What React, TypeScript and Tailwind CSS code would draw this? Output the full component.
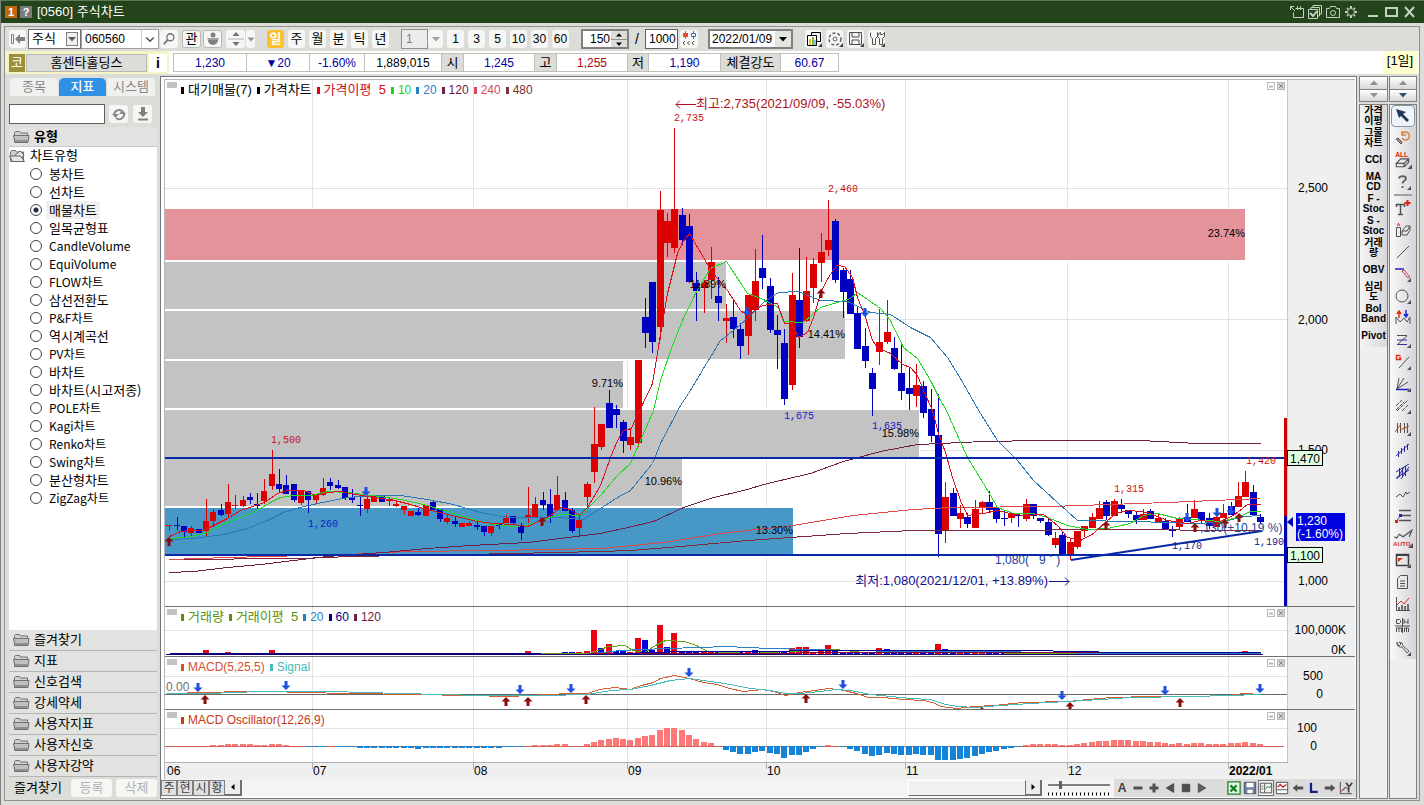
import { useState } from 'react'
import type { ReactNode } from 'react'

type Candle = [dir: 'r' | 'b', high: number, top: number, bottom: number, low: number]

const RED = '#dc0000'
const BLUE = '#0000c0'

const barX = (i: number) => Math.round(169.3 + i * 7.32)

const CANDLES: Candle[] = [
  ['r', 525, 525, 526, 531], ['b', 517, 525, 526, 530], ['b', 526, 526, 532, 537], ['r', 526, 528, 533, 537],
  ['b', 529, 529, 533, 533], ['r', 499, 521, 531, 536], ['r', 509, 512, 521, 527], ['b', 504, 510, 515, 516],
  ['r', 484, 502, 514, 517], ['r', 495, 505, 506, 509], ['r', 496, 500, 506, 507], ['b', 493, 497, 500, 504],
  ['b', 493, 504, 506, 509], ['r', 479, 491, 501, 504], ['r', 450, 474, 486, 490], ['b', 469, 484, 489, 493],
  ['b', 475, 485, 494, 494], ['b', 484, 484, 500, 502], ['r', 491, 491, 503, 505], ['b', 491, 491, 500, 513],
  ['r', 495, 495, 500, 504], ['r', 478, 488, 495, 496], ['b', 478, 482, 486, 490], ['b', 480, 485, 488, 489],
  ['b', 487, 487, 498, 500], ['b', 489, 497, 500, 503], ['b', 496, 505, 506, 516], ['r', 497, 499, 509, 513],
  ['r', 495, 495, 502, 502], ['b', 496, 496, 502, 502], ['r', 497, 499, 501, 506], ['r', 500, 504, 506, 507],
  ['r', 506, 506, 510, 514], ['r', 511, 511, 516, 516], ['b', 508, 512, 515, 516], ['r', 505, 505, 516, 516],
  ['b', 501, 502, 510, 510], ['b', 509, 509, 519, 522], ['r', 514, 518, 522, 524], ['b', 517, 521, 524, 527],
  ['r', 523, 523, 527, 527], ['r', 521, 523, 526, 526], ['b', 522, 525, 527, 530], ['b', 526, 526, 532, 536],
  ['r', 526, 526, 533, 536], ['b', 523, 523, 526, 529], ['r', 515, 518, 523, 523], ['b', 516, 516, 523, 525],
  ['b', 523, 526, 533, 540], ['r', 487, 515, 517, 523], ['r', 497, 504, 518, 518], ['b', 492, 500, 505, 510],
  ['b', 489, 504, 516, 523], ['r', 476, 495, 510, 510], ['b', 492, 500, 511, 511], ['b', 508, 510, 531, 533],
  ['r', 516, 520, 528, 536], ['r', 482, 484, 497, 507], ['r', 407, 444, 472, 483], ['r', 424, 424, 447, 450],
  ['b', 390, 403, 428, 428], ['b', 405, 409, 415, 428], ['b', 420, 422, 441, 453], ['r', 428, 437, 445, 450],
  ['r', 360, 360, 443, 447], ['b', 298, 317, 333, 348], ['b', 282, 282, 342, 353], ['r', 191, 210, 327, 340],
  ['r', 213, 221, 243, 257], ['r', 128, 209, 248, 253], ['b', 208, 215, 240, 245], ['b', 214, 226, 282, 283],
  ['b', 272, 283, 291, 321], ['r', 280, 282, 288, 313], ['r', 247, 262, 280, 299], ['b', 277, 296, 303, 321],
  ['r', 304, 318, 321, 343], ['b', 299, 317, 329, 338], ['b', 323, 329, 346, 359], ['r', 295, 295, 336, 355],
  ['r', 249, 281, 310, 321], ['b', 235, 268, 278, 289], ['b', 278, 286, 330, 333], ['b', 315, 330, 335, 369],
  ['b', 329, 343, 399, 405], ['r', 273, 295, 385, 390], ['b', 248, 300, 337, 348], ['r', 257, 291, 321, 322],
  ['r', 258, 264, 288, 303], ['r', 233, 252, 263, 282], ['r', 200, 240, 250, 256], ['b', 219, 221, 280, 283],
  ['b', 268, 270, 292, 318], ['b', 270, 279, 314, 314], ['b', 307, 313, 349, 349], ['b', 328, 346, 361, 368],
  ['b', 368, 373, 389, 416], ['r', 309, 342, 352, 365], ['r', 300, 332, 342, 344], ['b', 337, 348, 369, 370],
  ['b', 342, 373, 391, 400], ['b', 368, 388, 394, 410], ['r', 364, 385, 396, 407], ['b', 381, 386, 413, 418],
  ['b', 389, 409, 436, 442], ['b', 394, 435, 534, 557], ['r', 482, 497, 530, 543], ['b', 488, 493, 516, 516],
  ['r', 505, 513, 519, 528], ['b', 513, 517, 524, 528], ['r', 500, 509, 528, 528], ['r', 501, 502, 507, 514],
  ['b', 491, 502, 510, 513], ['b', 508, 508, 519, 523], ['b', 510, 518, 519, 526], ['r', 514, 514, 518, 523],
  ['b', 515, 515, 516, 527], ['r', 499, 504, 519, 521], ['b', 504, 504, 516, 519], ['b', 518, 518, 521, 523],
  ['b', 517, 522, 535, 536], ['r', 532, 538, 545, 548], ['b', 531, 535, 554, 554], ['r', 539, 542, 555, 560],
  ['r', 531, 531, 547, 549], ['r', 526, 526, 531, 537], ['r', 513, 517, 528, 528], ['r', 501, 508, 519, 519],
  ['b', 500, 502, 516, 520], ['r', 499, 501, 516, 516], ['b', 499, 505, 509, 513], ['b', 510, 510, 514, 518],
  ['b', 512, 515, 520, 524], ['r', 509, 514, 520, 520], ['b', 509, 511, 519, 519], ['r', 513, 518, 523, 523],
  ['b', 518, 521, 529, 529], ['b', 526, 529, 531, 537], ['r', 517, 518, 527, 530], ['b', 504, 517, 522, 522],
  ['r', 500, 509, 518, 518], ['b', 512, 512, 521, 524], ['b', 513, 518, 526, 529], ['r', 511, 517, 527, 527],
  ['r', 504, 513, 518, 518], ['b', 502, 506, 515, 515], ['r', 482, 496, 507, 507], ['r', 471, 482, 497, 497],
  ['b', 485, 492, 515, 515], ['b', 514, 517, 522, 524],
]

const MOVING_AVERAGES = [
  {
    color: '#802838',
    points: '169,559 300,558 350,556 467,554 600,551 630,550 680,546 747,540 847,533 913,530 1000,530 1100,529 1260,530',
  },
  {
    color: '#e04848',
    points: '169,559 227,557 347,554 407,551 493,550 600,548 623,546 663,542 720,533 793,525 853,515 913,509 950,507 1050,506 1167,502 1260,498',
  },
  {
    color: '#702048',
    points: '169,572 193,571 227,567 260,564 293,560 327,556 383,552 427,548 470,545 527,542 560,538 600,533 623,528 653,521 683,507 713,497 743,490 767,483 810,473 843,461 880,451 917,444 940,443 983,441 1040,440 1140,440 1197,443 1260,443',
  },
  {
    color: '#2a78b8',
    points: '169,539 193,538 223,534 247,528 267,520 283,512 303,506 327,501 347,497 373,495 400,495 427,499 453,504 480,512 507,517 560,517 583,519 600,508 617,497 630,490 652,463 660,443 680,405 690,390 703,368 720,340 733,330 747,318 763,302 778,292 798,291 820,300 847,301 870,312 890,314 910,327 930,337 947,357 960,378 980,413 997,440 1017,460 1033,480 1057,502 1077,520 1133,521 1167,522 1190,523 1220,522 1243,516 1260,515',
  },
  {
    color: '#20d820',
    points: '169,538 192,536 207,532 220,525 237,518 253,512 270,502 280,497 293,495 310,495 327,491 347,492 363,494 380,496 400,499 423,504 447,511 470,518 493,524 513,526 527,525 547,518 560,514 580,515 590,505 600,495 617,475 630,463 640,440 653,410 660,380 672,345 682,320 695,293 710,268 726,261 747,293 763,299 778,307 783,321 803,322 820,307 837,302 850,298 857,292 880,308 890,320 903,347 917,358 930,380 940,400 945,408 958,437 967,457 983,483 997,507 1013,513 1033,513 1047,517 1067,525 1087,529 1107,528 1130,523 1143,515 1157,513 1177,518 1193,519 1220,521 1237,517 1250,511 1260,511',
  },
  {
    color: '#d81020',
    points: '169,536 180,531 190,530 203,530 227,518 240,510 249,507 264,502 277,493 287,490 303,490 315,495 327,492 340,491 350,493 373,497 390,499 410,504 430,510 443,513 460,517 477,521 493,523 513,524 527,526 540,520 550,515 560,507 570,509 579,515 587,507 600,485 610,457 617,440 623,430 631,428 635,418 643,402 652,383 659,340 667,293 677,253 682,242 689,233 703,257 712,272 727,290 740,310 747,315 762,305 777,303 784,323 791,323 798,337 807,332 813,317 821,290 828,277 836,265 844,266 852,277 857,297 865,317 872,340 877,347 890,353 902,364 910,367 917,375 923,390 932,410 938,433 945,452 952,477 960,500 967,515 983,513 997,510 1010,513 1023,515 1043,514 1057,525 1067,537 1080,540 1093,533 1107,520 1117,512 1130,510 1147,512 1167,520 1187,523 1200,520 1217,522 1233,515 1247,504 1260,504',
  },
]

const BANDS = [
  { y: 209, h: 51, right: 1245, fill: '#e5939b', label: '23.74%' },
  { y: 262, h: 47, right: 726, fill: '#c3c3c3', label: '11.89%' },
  { y: 311, h: 48, right: 845, fill: '#c3c3c3', label: '14.41%' },
  { y: 361, h: 47, right: 623, fill: '#c3c3c3', label: '9.71%' },
  { y: 410, h: 48, right: 919, fill: '#c3c3c3', label: '15.98%' },
  { y: 459, h: 47, right: 682, fill: '#c3c3c3', label: '10.96%' },
  { y: 508, h: 47, right: 793, fill: '#4798c6', label: '13.30%' },
]

const MONTH_LINES = [312, 473, 627, 766, 905, 1067, 1228]

const PRICE_TAGS: [x: number, y: number, text: string, color: string][] = [
  [674, 121, '2,735', '#c81018'],
  [828, 192, '2,460', '#c81018'],
  [271, 443, '1,500', '#c81018'],
  [1114, 492, '1,315', '#c81018'],
  [1246, 464, '1,420', '#c81018'],
  [308, 527, '1,260', '#1020c8'],
  [784, 419, '1,675', '#1020c8'],
  [872, 429, '1,635', '#1020c8'],
  [1172, 549, '1,170', '#102090'],
  [1254, 545, '1,190', '#102090'],
]

// index -> [top y, direction]
const VOLUME: Record<number, [number, 'r' | 'b']> = {
  5: [650, 'r'], 8: [652, 'r'], 13: [653, 'r'], 14: [650, 'r'], 49: [651, 'r'], 57: [651, 'r'], 58: [630, 'r'],
  59: [648, 'b'], 60: [644, 'r'], 61: [651, 'b'], 62: [651, 'b'], 64: [638, 'r'], 65: [640, 'b'], 66: [650, 'b'],
  67: [625, 'r'], 68: [647, 'b'], 69: [633, 'r'], 79: [651, 'r'], 80: [650, 'b'], 85: [648, 'r'], 86: [647, 'r'],
  87: [647, 'r'], 89: [650, 'r'], 90: [645, 'r'], 91: [649, 'b'], 97: [648, 'r'], 98: [649, 'b'], 99: [650, 'b'],
  105: [644, 'r'], 106: [649, 'b'], 117: [652, 'r'], 131: [652, 'r'], 140: [652, 'r'], 147: [651, 'r'],
}

const OSC = [
  0, 0, 0, 0, 0, 0, 1, 1, 2, 2, 2, 2, 1, 1, 2, 2, 1, 0, 0, -1, -1, -1, 0, -1, -1, -1, -2, -2, -2, -2, -2, -2, -2, -2,
  -3, -2, -2, -2, -2, -2, -2, -2, -2, -2, -2, -2, -1, -1, -1, 0, 1, 1, 1, 2, 2, 0, 0, 2, 4, 6, 7, 8, 7, 6, 8, 10, 11,
  16, 18, 18, 16, 11, 7, 4, 3, 0, -4, -6, -8, -8, -6, -5, -7, -8, -12, -9, -9, -6, -3, -1, 1, 0, -1, -3, -5, -8, -10,
  -9, -7, -8, -9, -9, -8, -9, -9, -14, -14, -14, -13, -12, -10, -8, -6, -5, -3, -2, -1, 1, 2, 2, 2, 2, 1, 1, 2, 3, 4,
  5, 5, 6, 6, 6, 5, 5, 4, 4, 3, 2, 3, 2, 3, 3, 2, 2, 2, 3, 3, 4, 3, 2,
]

const UP = '#8c0c0c'
const DOWN = '#1c50e0'

function Arrow({ x, y, up = false }: { x: number; y: number; up?: boolean }) {
  const d = up
    ? `M${x} ${y}l4.5 4.500h-3v4.500h-3v-4.500h-3z`
    : `M${x} ${y + 9}l4.500-4.500h-3v-4.500h-3v4.500h-3z`
  return <path d={d} fill={up ? UP : DOWN} />
}

function Grid({ top, bottom, rows }: { top: number; bottom: number; rows: number[] }) {
  return (
    <g shapeRendering="crispEdges">
      <rect x={165} y={top} width={1122} height={bottom - top} fill="#fff" />
      <rect x={1287} y={top} width={68} height={bottom - top} fill="#efefef" />
      {MONTH_LINES.map(x => <rect key={x} x={x} y={top} width={1} height={bottom - top} fill="#e4e4e4" />)}
      {rows.map(y => <rect key={y} x={165} y={y} width={1126} height={1} fill="#e2e2e2" />)}
      <rect x={1287} y={top} width={1} height={bottom - top} fill="#c8c8c8" />
    </g>
  )
}

// Half a unit in, so that flat one-pixel stretches fill a whole row.
function Lines({ children }: { children: ReactNode }) {
  return (
    <g fill="none" shapeRendering="crispEdges" transform="translate(0.5 0.5)">
      {children}
    </g>
  )
}

function PanelBoxes({ y }: { y: number }) {
  return (
    <g fill="none" stroke="#b8b8b8">
      <rect x={167} y={y} width={10} height={6} fill="#c2c2c2" stroke="none" />
      <rect x={1267.500} y={y + 0.5} width={7} height={7} />
      <path d={`M1269 ${y + 4.500}h4`} strokeWidth={2} />
      <rect x={1277.500} y={y + 0.5} width={7} height={7} fill="#d4d4d4" />
      <path d={`M1279 ${y + 2}l4 4m0-4l-4 4`} stroke="#888" />
    </g>
  )
}

function PriceChart() {
  return (
    <svg viewBox="165 80 1190 526" className="block w-full" role="img" aria-label="가격차트">
      <Grid top={80} bottom={606} rows={[188, 319, 450, 581]} />
      <PanelBoxes y={82} />
      <g shapeRendering="crispEdges">
        {BANDS.map(b => (
          <g key={b.label}>
            <rect x={165} y={b.y - 2} width={b.right - 165} height={b.h + 4} fill="#fff" />
            <rect x={165} y={b.y} width={b.right - 165} height={b.h} fill={b.fill} />
          </g>
        ))}
        {CANDLES.map(([dir, high, top, bottom, low], i) => (
          <g key={i} fill={dir === 'r' ? RED : BLUE}>
            <rect x={barX(i)} y={high} width={1} height={Math.max(1, low - high)} />
            <rect x={barX(i) - 3} y={top} width={i < 57 ? 6 : 7} height={bottom - top} />
          </g>
        ))}
      </g>
      <Lines>
        {MOVING_AVERAGES.map(m => <polyline key={m.color} points={m.points} stroke={m.color} />)}
      </Lines>
      <g fill="#0828a8" shapeRendering="crispEdges">
        <rect x={165} y={457} width={1119} height={2} />
        <rect x={165} y={554} width={1119} height={2} />
      </g>
      <path d="M1071 560L1262 531" stroke="#0828a8" strokeWidth={2} />
      <Arrow x={169} y={537} up />
      <Arrow x={542} y={517} up />
      <Arrow x={821} y={289} up />
      <Arrow x={1106} y={521} up />
      <Arrow x={1195} y={523} up />
      <Arrow x={1225} y={519} up />
      <Arrow x={1239} y={513} up />
      <Arrow x={366} y={487} />
      <Arrow x={747} y={307} />
      <Arrow x={865} y={308} />
      <Arrow x={1187} y={513} />
      <Arrow x={1217} y={508} />
      <Arrow x={1231} y={506} />

      <g className="text-[11px]" textAnchor="end" fill="#000">
        {BANDS.map(b => <text key={b.label} x={b.right} y={b.y + Math.floor(b.h / 2) + 3}>{b.label}</text>)}
      </g>
      <g className="font-['Liberation_Mono',monospace] text-[10px]">
        {PRICE_TAGS.map(([x, y, text, color]) => <text key={text} x={x} y={y} fill={color}>{text}</text>)}
      </g>
      <g className="text-[12px]">
        <path d="M676 104.500h20m-16-4l-4 4 4 4" fill="none" stroke="#b01020" />
        <text x={696} y={108} fill="#b01020" className="text-[13px]">최고:2,735(2021/09/09, -55.03%)</text>
        <text x={1048} y={585} textAnchor="end" fill="#101090" className="text-[13px]">최저:1,080(2021/12/01, +13.89%)</text>
        <path d="M1049 581.500h20m-4-4l4 4-4 4" fill="none" stroke="#101090" />
        <text x={995} y={564} fill="#2040a0">1,080(&nbsp;&nbsp;&nbsp;9&nbsp;˚&nbsp;)</text>
        <text x={1200} y={532} fill="#204898">,130(+10.19 %)</text>
      </g>

      <g shapeRendering="crispEdges">
        <rect x={1284} y={418} width={3} height={98} fill="#d00000" />
        <rect x={1284} y={516} width={3} height={90} fill="#0000b0" />
      </g>
      <g className="text-[12px]">
        <text x={1298} y={192}>2,500</text>
        <text x={1298} y={324}>2,000</text>
        <text x={1298} y={454}>1,500</text>
        <text x={1298} y={585}>1,000</text>
        <rect x={1287.500} y={450.500} width={35} height={15} fill="#e0ffe0" stroke="#000" />
        <text x={1290} y={463}>1,470</text>
        <rect x={1287.500} y={547.500} width={35} height={15} fill="#e0ffe0" stroke="#000" />
        <text x={1290} y={560}>1,100</text>
        <path d="M1287 522l6-5v10z" fill="#0000c0" />
        <rect x={1296} y={513} width={49} height={28} fill="#0000e0" />
        <text x={1297} y={525} fill="#fff">1,230</text>
        <text x={1297} y={538} fill="#fff">(-1.60%)</text>
      </g>
    </svg>
  )
}

function VolumeChart() {
  return (
    <svg viewBox="165 607 1190 49" className="block w-full" role="img" aria-label="거래량">
      <Grid top={607} bottom={656} rows={[630]} />
      <PanelBoxes y={609} />
      <g shapeRendering="crispEdges">
        {CANDLES.map(([dir], i) => {
          const v = VOLUME[i]
          const top = v ? v[0] : i > 53 && i < 118 ? 652 : 654
          const d = v ? v[1] : dir
          return <rect key={i} x={barX(i) - 3} y={top} width={6} height={655 - top} fill={d === 'r' ? '#f00010' : '#0000d8'} />
        })}
      </g>
      <Lines>
        <polyline stroke="#68a010" points="169,654 583,653 589,653 608,646 625,645 632,650 644,652 655,645 665,640 684,641 696,645 707,651 750,653 788,651 835,649 863,652 900,652 940,651 985,651 1010,653 1260,653" />
        <polyline stroke="#2a80c8" points="169,654 583,654 620,650 665,648 700,647 725,646 770,648 850,650 900,651 990,651 1050,652 1100,653 1260,653" />
        <polyline stroke="#800040" points="169,654 480,654 700,653 900,652 1260,652" />
        <polyline stroke="#000090" points="169,653 480,653 600,654 680,651 900,650 1050,650 1055,651 1097,651 1100,652 1260,652" />
        <path d="M165 654H1262" stroke="#200070" />
      </Lines>
      <g className="text-[12px]" textAnchor="end">
        <text x={1346} y={634}>100,000K</text>
        <text x={1346} y={654}>0K</text>
      </g>
    </svg>
  )
}

function MacdChart() {
  return (
    <svg viewBox="165 657 1190 52" className="block w-full" role="img" aria-label="MACD">
      <Grid top={657} bottom={709} rows={[676]} />
      <PanelBoxes y={659} />
      <path d="M165 694.500H1287" stroke="#686868" />
      <Lines>
        <polyline
          stroke="#d86030"
          points="167,693 207,692 240,691 269,691 302,692 349,693 415,694 467,695 509,696 547,694 571,693 587,693 599,689 615,687 630,689 641,685 653,682 660,678 674,675 689,678 703,682 717,684 729,688 743,691 762,689 773,691 785,695 799,692 814,690 828,688 844,690 856,693 868,697 882,697 904,699 923,700 932,702 941,706 956,708 974,706 994,705 1022,702 1067,701 1088,699 1112,697 1150,696 1192,696 1227,695 1244,693 1261,694"
        />
        <polyline
          stroke="#48b8b8"
          points="167,693 207,693 260,691 330,691 400,693 480,695 545,695 587,694 610,690 630,689 650,685 670,680 689,678 710,681 730,684 750,688 770,690 785,693 800,693 820,691 835,689 850,690 870,694 890,696 910,698 930,699 945,704 958,706 975,707 1000,705 1030,703 1067,701 1100,699 1130,697 1192,696 1261,694"
        />
      </Lines>
      {[[198, 683], [286, 681], [520, 685], [571, 684], [689, 668], [843, 680], [1062, 691], [1165, 686], [1260, 684]].map(([x, y]) => (
        <Arrow key={x} x={x} y={y} />
      ))}
      {[[205, 695], [506, 697], [528, 697], [586, 695], [806, 694], [982, 707], [1070, 702], [1180, 698]].map(([x, y]) => (
        <Arrow key={x} x={x} y={y} up />
      ))}
      <g className="text-[12px]">
        <text x={166} y={691} fill="#707070">0.00</text>
        <text x={1323} y={680} textAnchor="end">500</text>
        <text x={1323} y={698} textAnchor="end">0</text>
      </g>
    </svg>
  )
}

function OscillatorChart() {
  return (
    <svg viewBox="165 710 1190 69" className="block w-full" role="img" aria-label="MACD Oscillator">
      <Grid top={710} bottom={762} rows={[728]} />
      <PanelBoxes y={712} />
      <g shapeRendering="crispEdges">
        <rect x={165} y={746} width={1119} height={1} fill="#d06050" />
        {OSC.map((v, i) => (
          <rect
            key={i}
            x={barX(i) - 3}
            y={v > 0 ? 746 - v : 746}
            width={6}
            height={Math.max(1, Math.abs(v))}
            fill={v < 0 ? '#1484d8' : v > 0 ? '#ff7878' : '#d06050'}
          />
        ))}
        <rect x={165} y={762} width={1190} height={17} fill="#efefef" />
        <rect x={165} y={762} width={1123} height={1} fill="#b0b0b0" />
        {MONTH_LINES.map(x => <rect key={x} x={x} y={763} width={1} height={6} fill="#b0b0b0" />)}
      </g>
      <g className="text-[12px]">
        <text x={167} y={775}>06</text>
        <text x={313} y={775}>07</text>
        <text x={474} y={775}>08</text>
        <text x={628} y={775}>09</text>
        <text x={767} y={775}>10</text>
        <text x={906} y={775}>11</text>
        <text x={1068} y={775}>12</text>
        <text x={1229} y={775} className="font-bold">2022/01</text>
        <text x={1317} y={732} textAnchor="end">100</text>
        <text x={1317} y={750} textAnchor="end">0</text>
      </g>
    </svg>
  )
}

type LegendItem = { text: string; tone: string; mark: string }

function Panel({ legend, children, last = false }: { legend: LegendItem[]; children: ReactNode; last?: boolean }) {
  return (
    <section className={`relative ${last ? '' : 'border-b border-[#707070]'}`}>
      {children}
      <ul className="absolute top-0.5 left-4 flex gap-[5px] leading-4">
        {legend.map(l => (
          <li key={l.text} className={`flex items-center gap-1 ${l.tone}`}>
            <span className={`h-[7px] w-[3px] ${l.mark}`} />
            {l.text}
          </li>
        ))}
      </ul>
    </section>
  )
}

const PRICE_LEGEND: LegendItem[] = [
  { text: '대기매물(7)', tone: 'text-black text-[13px]', mark: 'bg-black' },
  { text: '가격차트', tone: 'text-black text-[13px]', mark: 'bg-black' },
  { text: '가격이평  5', tone: 'text-[#d01020] text-[13px] whitespace-pre', mark: 'bg-[#e00010]' },
  { text: '10', tone: 'text-[#20d020] text-xs', mark: 'bg-[#20d020]' },
  { text: '20', tone: 'text-[#2a80c8] text-xs', mark: 'bg-[#2a80c8]' },
  { text: '120', tone: 'text-[#702048] text-xs', mark: 'bg-[#702048]' },
  { text: '240', tone: 'text-[#d84858] text-xs', mark: 'bg-[#d84858]' },
  { text: '480', tone: 'text-[#803038] text-xs', mark: 'bg-[#803038]' },
]

const VOLUME_LEGEND: LegendItem[] = [
  { text: '거래량', tone: 'text-[#58900c] text-[13px]', mark: 'bg-[#58900c]' },
  { text: '거래이평  5', tone: 'text-[#58900c] text-[13px] whitespace-pre', mark: 'bg-[#58900c]' },
  { text: '20', tone: 'text-[#2a80c8] text-xs', mark: 'bg-[#2a80c8]' },
  { text: '60', tone: 'text-[#000090] text-xs', mark: 'bg-[#000090]' },
  { text: '120', tone: 'text-[#702048] text-xs', mark: 'bg-[#702048]' },
]

const MACD_LEGEND: LegendItem[] = [
  { text: 'MACD(5,25,5)', tone: 'text-[#d05030] text-xs', mark: 'bg-[#e05020]' },
  { text: 'Signal', tone: 'text-[#48b8b8] text-xs', mark: 'bg-[#48b8b8]' },
]

const OSC_LEGEND: LegendItem[] = [
  { text: 'MACD Oscillator(12,26,9)', tone: 'text-[#c83818] text-xs', mark: 'bg-[#d03810]' },
]

function Icon({ children, size = 16 }: { children: ReactNode; size?: number }) {
  return (
    <svg width={size} height={size} viewBox="0 0 16 16" fill="none" stroke="currentColor" className="shrink-0" aria-hidden="true">
      {children}
    </svg>
  )
}

const keyCls = 'flex h-[18px] shrink-0 items-center justify-center rounded-[3px] bg-[#f6f6f5] text-black'

function Key({ label, children, className = 'w-[17px]' }: { label?: string; children: ReactNode; className?: string }) {
  return (
    <button type="button" aria-label={label} className={`${keyCls} ${className}`}>
      {children}
    </button>
  )
}

function Caret({ className = 'text-[#606060]' }: { className?: string }) {
  return (
    <svg width="8" height="5" viewBox="0 0 8 5" className={className} aria-hidden="true">
      <path d="M0 0h8l-4 4.500z" fill="currentColor" />
    </svg>
  )
}

function TitleBar() {
  return (
    <header className="flex h-[23px] items-center border-t border-[#5c7a54] bg-[#24441c] pr-[7px] pl-1 text-white">
      <span className="flex size-3 items-center justify-center bg-[#c06810] text-[11px] font-bold">1</span>
      <span className="ml-[3px] flex size-3 items-center justify-center bg-[#7c7c7c] text-[11px] font-bold">?</span>
      <h1 className="ml-[5px] text-[13px]">[0560] 주식차트</h1>
      <div className="ml-auto flex items-center gap-[2px] text-[#c4d0c0]">
        <button type="button" aria-label="새 창"><Icon><path d="M6.500 4.500h8v9h-10v-5M8.500 2v4M11.500 2v4M1.500 6V2.500H5M2 3l4 4" /></Icon></button>
        <button type="button" aria-label="복사"><Icon><path d="M1.500 5.500h9v9h-9zM4 5V3.500h8.500V12H11M6 3V1.500h8.500V10H13" /><path d="M3 9l3 3 4-5" strokeWidth="2" /></Icon></button>
        <button type="button" aria-label="화면 저장"><Icon><path d="M1.500 4.500h3l1-2h5l1 2h3v9h-13z" /><circle cx="8" cy="9" r="2.500" /></Icon></button>
        <button type="button" aria-label="설정"><Icon><circle cx="8" cy="8" r="3.500" /><path d="M8 2v2M8 12v2M2 8h2M12 8h2M4 4l1 1M11 11l1 1M12 4l-1 1M5 11l-1 1" strokeWidth="2" /></Icon></button>
        <button type="button" aria-label="최소화" className="ml-1"><Icon><path d="M3 12h10" strokeWidth="2" /></Icon></button>
        <button type="button" aria-label="최대화"><Icon><path d="M3 4h11v8H3z" strokeWidth="2" /></Icon></button>
        <button type="button" aria-label="닫기"><Icon><path d="M4 3l9 10M13 3L4 13" strokeWidth="2" /></Icon></button>
      </div>
    </header>
  )
}

const PERIODS = ['일', '주', '월', '분', '틱', '년']
const TICKS = ['1', '3', '5', '10', '30', '60']

function Toolbar() {
  const [period, setPeriod] = useState('일')
  return (
    <div className="flex h-6 items-center pl-1 text-xs">
      <Key label="처음"><Icon><path d="M1.500 3.500h2v9h-2z" stroke="#808080" /><path d="M5 8l5-5v3h5v4h-5v3z" fill="#808080" stroke="none" /></Icon></Key>
      <div className="relative ml-0.5 flex h-5 w-[53px] items-center border border-[#707070] bg-white">
        <select aria-label="구분" className="h-full w-full appearance-none pl-[3px] text-[13px] leading-4">
          <option>주식</option>
        </select>
        <span className="pointer-events-none absolute right-[2px] flex h-[14px] w-3 items-center justify-center border border-[#808080] bg-[#f0f0f0]"><Caret /></span>
      </div>
      <div className="flex h-5 w-[78px] items-center border border-[#a0a0a0] bg-white">
        <input aria-label="종목코드" defaultValue="060560" className="w-[59px] pl-[3px] text-xs outline-none" />
        <button type="button" aria-label="종목 목록" className="flex h-full flex-1 items-center justify-center border-l border-[#d0d0d0]">
          <Icon size={12}><path d="M3 6l5 5 5-5" strokeWidth="2" stroke="#505050" /></Icon>
        </button>
      </div>
      <Key label="찾기" className="ml-px w-[18px]"><Icon size={14}><circle cx="9.500" cy="6" r="4" stroke="#707070" strokeWidth="1.500" /><path d="M6.500 9L2 14" stroke="#707070" strokeWidth="2" /></Icon></Key>
      <Key className="ml-1 w-[19px] border border-[#b8b8b8] text-[13px]">관</Key>
      <Key label="통화" className="ml-0.5 w-[19px] border border-[#b8b8b8]">
        <Icon>
          <circle cx="8" cy="4" r="2.500" fill="#808080" stroke="none" />
          <path d="M2 7h12l-1.500 3h-9z" fill="#a0a0a0" stroke="none" />
          <path d="M3 9a5 5 0 0 0 10 0z" fill="#808080" stroke="none" />
        </Icon>
      </Key>
      <Key label="이동" className="ml-1 w-[19px]"><Icon><path d="M8 1l3.500 4h-7zM8 15l3.500-4h-7z" fill="#707070" stroke="none" /><path d="M0 8h16" stroke="#b0b0b0" /></Icon></Key>
      <Key label="더보기" className="ml-px w-[9px]"><Icon size={8}><path d="M1 5h14l-7 8z" fill="#909090" stroke="none" /></Icon></Key>
      <div className="ml-3 flex gap-1">
        {PERIODS.map(p => (
          <button
            key={p}
            type="button"
            onClick={() => setPeriod(p)}
            className={`flex h-[18px] w-[17px] items-center justify-center rounded-[3px] text-[13px] ${
              p === period ? 'bg-[#fcc02c] font-bold text-white' : 'bg-[#f6f6f5]'
            }`}
          >
            {p}
          </button>
        ))}
      </div>
      <input aria-label="간격" defaultValue="1" disabled className="ml-3 h-5 w-[27px] border border-[#909090] bg-[#ececea] pl-1 text-[#808080]" />
      <Key label="간격 목록" className="w-[15px]"><Caret className="text-[#a0a0a0]" /></Key>
      <div className="ml-1 flex gap-1">
        {TICKS.map(t => <Key key={t}>{t}</Key>)}
      </div>
      <div className="ml-3 flex h-5 w-12 items-center border-2 border-[#808080] bg-white">
        <input aria-label="조회 개수" defaultValue="150" className="w-[27px] text-right outline-none" />
        <span className="ml-auto flex w-4 flex-col bg-[#dcdcd8]">
          <button type="button" aria-label="증가" className="flex h-2 items-center justify-center"><Icon size={6}><path d="M0 12h16L8 3z" fill="#000" stroke="none" /></Icon></button>
          <button type="button" aria-label="감소" className="flex h-2 items-center justify-center border-t border-[#909090]"><Icon size={6}><path d="M0 4h16l-8 9z" fill="#000" stroke="none" /></Icon></button>
        </span>
      </div>
      <span className="w-4 text-center text-sm">/</span>
      <input aria-label="전체 개수" defaultValue="1000" className="h-5 w-[33px] border border-[#606060] bg-white pl-[3px]" />
      <Key label="캔들 이동" className="ml-0.5 w-[18px]">
        <Icon>
          <path d="M4.500 0v8" stroke="#e05030" /><path d="M2 2h5v4H2z" fill="#e05030" stroke="none" />
          <path d="M12.500 0v8" stroke="#3070b0" /><path d="M10.500 2.500h4v3h-4z" fill="#fff" stroke="#3070b0" />
          <path d="M4 10l-2 2 2 2M8.500 10l-2 2 2 2M13 10l-2 2 2 2" stroke="#505050" />
        </Icon>
      </Key>
      <div className="relative ml-2.5 flex h-5 w-[85px] items-center border-2 border-[#808080] bg-white">
        <select aria-label="날짜" className="h-full w-full appearance-none pl-0.5 text-xs">
          <option>2022/01/09</option>
        </select>
        <span className="pointer-events-none absolute right-0 flex h-4 w-4 items-center justify-center bg-[#e4e4e0]"><Caret className="text-black" /></span>
      </div>
      <div className="ml-3 flex gap-1 text-[#505050]">
        <Key label="차트 비교"><Icon><path d="M5.500 1.500h9v9h-9z" fill="#f0f0f0" /><path d="M1.500 4.500h9v10h-9z" fill="#fff" /><path d="M4 8v6" stroke="#f0c020" strokeWidth="2" /><path d="M7 6v8" stroke="#70c040" strokeWidth="2" /><path d="M9 9v5" stroke="#3080c0" /><path d="M12 16h4v-4z" fill="#404040" stroke="none" /></Icon></Key>
        <Key label="환경설정"><Icon><circle cx="8" cy="8" r="6" strokeDasharray="3 2" strokeWidth="1.500" stroke="#606060" /><circle cx="8" cy="8" r="2" stroke="#606060" /><path d="M12 16h4v-4z" fill="#404040" stroke="none" /></Icon></Key>
        <Key label="저장"><Icon><path d="M1.500 1.500h12v12h-12zM4 2v4h7V2M4 13v-4h7v4" stroke="#505050" /><path d="M12 16h4v-4z" fill="#404040" stroke="none" /></Icon></Key>
        <Key label="도구"><Icon><path d="M1.500 1.500v4l2 2v6h3v-6l2-2v-4M9.500 2.500l-1 3 2 2v6h3v-6l2-2v-4l-2 2h-2v-2z" stroke="#505050" /><path d="M12 16h4v-4z" fill="#404040" stroke="none" /></Icon></Key>
      </div>
    </div>
  )
}

const QUOTES = [
  { text: '1,230', cls: 'w-[72px] text-[#0000a0]' },
  { text: '▼20', cls: 'w-[63px] text-[#0000a0]' },
  { text: '-1.60%', cls: 'w-[55px] text-[#0000a0]' },
  { text: '1,889,015', cls: 'w-[77px] text-black' },
  { text: '시', cls: 'w-[22px] bg-[#dcdcd8] text-[13px]' },
  { text: '1,245', cls: 'w-[71px] text-[#0000a0]' },
  { text: '고', cls: 'w-[22px] bg-[#dcdcd8] text-[13px]' },
  { text: '1,255', cls: 'w-[71px] text-[#b00010]' },
  { text: '저', cls: 'w-[21px] bg-[#dcdcd8] text-[13px]' },
  { text: '1,190', cls: 'w-[72px] text-[#0000a0]' },
  { text: '체결강도', cls: 'w-[60px] bg-[#dcdcd8] text-[13px]' },
  { text: '60.67', cls: 'w-[58px] text-[#0000a0]' },
]

function QuoteBar() {
  return (
    <div className="flex h-[23px] bg-white pr-0.5 text-xs">
      <div className="flex w-[164px] items-center border-y-2 border-[#f4f4c4] bg-[#f4f4c4] pl-1">
        <span className="flex h-[18px] w-4 items-center justify-center bg-[#9a9038] text-[13px] text-white">코</span>
        <span className="ml-px flex h-[18px] flex-1 items-center justify-center border border-[#b8b8b4] bg-[#dcdcd8] text-[13px]">홈센타홀딩스</span>
        <button type="button" aria-label="종목 정보" className="mx-0.5 h-[18px] w-[18px] bg-white text-sm leading-4 font-bold">i</button>
      </div>
      <div className="ml-1 flex h-[19px] self-center border border-[#c0c0b8]">
        {QUOTES.map((q, i) => (
          <span key={q.text} className={`flex items-center justify-center ${i ? 'border-l border-[#c0c0b8]' : ''} ${q.cls}`}>
            {q.text}
          </span>
        ))}
      </div>
      <span className="ml-auto w-[34px] bg-[#ffffd0] pt-0.5 text-center text-[13px] leading-4 whitespace-nowrap">[1일]</span>
    </div>
  )
}

const CHART_TYPES = [
  '봉차트', '선차트', '매물차트', '일목균형표', 'CandleVolume', 'EquiVolume', 'FLOW차트', '삼선전환도', 'P&F차트', '역시계곡선',
  'PV차트', '바차트', '바차트(시고저종)', 'POLE차트', 'Kagi차트', 'Renko차트', 'Swing차트', '분산형차트', 'ZigZag차트',
]

const GROUPS = ['즐겨찾기', '지표', '신호검색', '강세약세', '사용자지표', '사용자신호', '사용자강약']

function Folder({ open = false }: { open?: boolean }) {
  return (
    <svg width="17" height="14" viewBox="0 0 17 14" aria-hidden="true" className="shrink-0">
      <path d="M1.500 12.500v-10l1-1h4l1 1.500h7v9.500z" fill="#d0d0d0" stroke="#707070" />
      {open
        ? <path d="M0.500 7h11l4 5.500h-12zM6 6l5-4 4 4-2 3" fill="#e8e8e8" stroke="#606060" />
        : <path d="M0.500 5.500h15.500l-1 7h-13z" fill="#c0c0c0" stroke="#707070" />}
      {!open && <path d="M2 10h13l-0.500 2h-12z" fill="#909090" />}
    </svg>
  )
}

function Sidebar() {
  const [type, setType] = useState('매물차트')
  return (
    <aside className="flex w-[148px] shrink-0 flex-col text-[13px]">
      <div className="flex h-[20px] items-end gap-px pt-px pl-px leading-[18px]">
        <button type="button" className="h-[18px] w-12 rounded-t bg-[#f0f0ee] text-[#888]">종목</button>
        <button type="button" className="h-[18px] w-[47px] rounded-t-[5px] bg-[#3090e4] font-medium text-white">지표</button>
        <button type="button" className="h-[18px] w-12 rounded-t bg-[#f0f0ee] text-[#888]">시스템</button>
      </div>
      <div className="flex h-[31px] items-center gap-1 pt-1">
        <input aria-label="지표 검색" className="h-5 w-24 border border-[#606060] bg-white px-1" />
        <Key label="새로고침" className="w-[19px]"><Icon><path d="M3 9a5 5 0 0 1 8-4M13 7a5 5 0 0 1-8 5" stroke="#888" strokeWidth="2" /><path d="M8 8h7l-3.500-4zM1 8h7l-3.500 4z" fill="#888" stroke="none" /></Icon></Key>
        <Key label="내려받기" className="ml-px w-[19px]"><Icon><path d="M6 1h4v5h3l-5 5-5-5h3z" fill="#808080" stroke="none" /><path d="M3 13.500h10" stroke="#808080" strokeWidth="2" /></Icon></Key>
      </div>
      <h2 className="flex h-5 items-center gap-1 border-b border-[#c8c8c8] bg-[#e2e2e0] pl-1 font-bold"><Folder />유형</h2>
      <div role="radiogroup" aria-label="차트유형" className="flex-1 bg-white leading-[18px]">
        <p className="flex h-[18px] items-center gap-1"><Folder open />차트유형</p>
        {CHART_TYPES.map(t => (
          <label key={t} className="flex h-[18px] items-center gap-1 pl-[21px]">
            <input
              type="radio"
              name="chart-type"
              checked={t === type}
              onChange={() => setType(t)}
              className="size-3 shrink-0 appearance-none rounded-full border border-[#404040] bg-white checked:bg-[radial-gradient(circle,#203040_2px,white_3px)]"
            />
            <span className={`px-[3px] whitespace-nowrap font-['Noto_Sans_CJK_KR',sans-serif] ${/^[A-Z]/.test(t) ? 'text-xs leading-[18px]' : ''} ${t === type ? 'bg-[#f0f0f0]' : ''}`}>{t}</span>
          </label>
        ))}
      </div>
      {GROUPS.map(g => (
        <button key={g} type="button" className="flex h-[21px] items-center gap-1 border-b border-[#b4b4b4] bg-[#e2e2e0] pl-1 text-left leading-5">
          <Folder />{g}
        </button>
      ))}
      <div className="flex h-[22px] items-center gap-1 pl-[5px]">
        <span className="mr-auto whitespace-nowrap">즐겨찾기</span>
        <button type="button" disabled className="h-[18px] w-[41px] rounded-[3px] bg-[#f6f6f5] leading-4 text-[#b0b0b0]">등록</button>
        <button type="button" disabled className="h-[18px] w-[41px] rounded-[3px] bg-[#f6f6f5] leading-4 text-[#b0b0b0]">삭제</button>
      </div>
    </aside>
  )
}

function BottomBar() {
  const small = 'flex size-4 items-center justify-center text-[#404040]'
  return (
    <div className="flex h-[18px] items-center bg-[#f4f4f4] text-xs">
      {['주', '현', '시', '황'].map(t => (
        <button key={t} type="button" className="flex size-4 items-center justify-center border border-[#808080] bg-[#e0e0e0] leading-[14px] text-[#404040]">{t}</button>
      ))}
      <button type="button" aria-label="왼쪽으로" className="flex h-4 w-[17px] items-center justify-center border-r-2 border-b-2 border-[#707070] bg-[#ececec]">
        <Icon size={8}><path d="M11 2v12L4 8z" fill="#000" stroke="none" /></Icon>
      </button>
      <div className="flex h-4 flex-1 justify-end">
        <span className="h-full w-[118px] border border-t-white border-r-[#707070] border-b-[#707070] border-l-white bg-[#f0f0f0]" />
      </div>
      <button type="button" aria-label="오른쪽으로" className="flex h-4 w-4 items-center justify-center border-r-2 border-b-2 border-[#707070] bg-[#ececec]">
        <Icon size={8}><path d="M5 2v12l7-6z" fill="#000" stroke="none" /></Icon>
      </button>
      <div className="mr-1 ml-1.5 flex w-[62px] flex-col justify-between">
        <input
          type="range"
          aria-label="확대"
          defaultValue="18"
          className="h-2 w-full appearance-none bg-[linear-gradient(#808080,#808080)] bg-[length:100%_2px] bg-center bg-no-repeat [&::-webkit-slider-thumb]:h-2 [&::-webkit-slider-thumb]:w-[3px] [&::-webkit-slider-thumb]:appearance-none [&::-webkit-slider-thumb]:bg-[#606060]"
        />
        <svg viewBox="0 0 62 5" className="mt-0.5 block w-full" aria-hidden="true">
          <path d="M0 3h62" stroke="#000" strokeWidth="3" strokeDasharray="1 3" />
        </svg>
      </div>
      <div className="flex h-full items-center bg-[#dcdcdc] pr-0.5">
        <button type="button" aria-label="자동" className={`${small} font-bold`}>A</button>
        <button type="button" aria-label="축소" className={small}><Icon size={12}><path d="M2 8h12" strokeWidth="4" stroke="#505050" /></Icon></button>
        <button type="button" aria-label="확대" className={small}><Icon size={12}><path d="M2 8h12M8 2v12" strokeWidth="4" stroke="#505050" /></Icon></button>
        <button type="button" aria-label="뒤로" className={small}><Icon size={12}><path d="M13 2v12L3 8z" fill="#505050" /></Icon></button>
        <button type="button" aria-label="정지" className={small}><Icon size={12}><path d="M3 3h10v10H3z" fill="#505050" /></Icon></button>
        <button type="button" aria-label="재생" className={small}><Icon size={12}><path d="M3 2v12l10-6z" fill="#606060" /></Icon></button>
        <button type="button" aria-label="엑셀" className={`${small} ml-4`}><Icon size={14}><path d="M1 1h14v14H1z" fill="#e8f8e0" stroke="#208030" strokeWidth="1.500" /><path d="M4 5l7 7M11 5l-7 7" stroke="#108020" strokeWidth="2.500" /></Icon></button>
        <button type="button" aria-label="차트 저장" className={small}><Icon size={14}><path d="M1.500 1.500h13v13h-13z" fill="#7080a0" stroke="#404860" /><path d="M4 2h8v5H4zM5 10h6v4H5z" fill="#fff" stroke="none" /></Icon></button>
        <button type="button" aria-label="분할" className={`${small} border border-[#707070] bg-[#f4f4f4]`}><Icon size={14}><path d="M1.500 2.500h13v11h-13zM6.500 3v10" /><path d="M8 9l2-3 2 2 2-3" stroke="#208030" /><path d="M3 6h2M3 9h2" /></Icon></button>
        <button type="button" aria-label="상하 분할" className={small}><Icon size={14}><path d="M1.500 1.500h13v13h-13zM2 10h12" fill="#fff" /><path d="M3 7l3-3 3 3 4-3" stroke="#c02020" strokeWidth="1.500" /></Icon></button>
        <button type="button" aria-label="이전" className={small}><Icon size={12}><path d="M1 8l6-5v3h8v4H7v3z" fill="#505050" stroke="none" /></Icon></button>
        <button type="button" aria-label="로그" className={small}><Icon size={12}><path d="M4 1v12h9" strokeWidth="3" stroke="#102080" /></Icon></button>
        <button type="button" aria-label="다음" className={small}><Icon size={12}><path d="M15 8L9 3v3H1v4h8v3z" fill="#505050" stroke="none" /></Icon></button>
        <button type="button" aria-label="차트 설정" className={small}><Icon size={14}><path d="M1.500 1v13.500H15M3 12l4-5 3 2" /><path d="M8 2l3 4v7M15 2l-3 4" strokeWidth="2" /><path d="M3 11l4-2" stroke="#d02020" /></Icon></button>
      </div>
    </div>
  )
}

const INDICATORS = [
  ['가격', '이평'], ['그물', '차트'], ['CCI'], ['MA', 'CD'], ['F -', 'Stoc'], ['S -', 'Stoc'], ['거래', '량'], ['OBV'], ['심리', '도'],
  ['Bol', 'Band'], ['Pivot'],
]

const corner = <path d="M12 16h4v-4z" fill="#505050" stroke="none" />

const DRAW_TOOLS: { name: string; icon: ReactNode }[] = [
  { name: '텍스트', icon: <><path d="M1 4.500h9M5.500 5v10M3 14.500h5M1.500 4v3M9.500 4v3" stroke="#505050" strokeWidth="1.500" /><path d="M12.500 0v6M9.500 3h6" stroke="#e02010" strokeWidth="2" /></> },
  { name: '지우개 통', icon: <><path d="M1.500 5.500h4v9h-4zM2 4l1.500-2L5 4" stroke="#505050" /><path d="M7 9l4-5h4l-3 5zM7 9v4h5l3-5V4" stroke="#505050" /><path d="M3 2h1" stroke="#e02010" strokeWidth="2" /></> },
  { name: '추세선', icon: <path d="M2 14L14 2" stroke="#505050" /> },
  { name: '펜', icon: <><path d="M0 3h9" stroke="#2020d0" strokeWidth="1.500" /><path d="M7 5l6 7 2-1-6-7z" stroke="#c04040" />{corner}</> },
  { name: '원', icon: <><circle cx="7" cy="8" r="6" stroke="#505050" />{corner}</> },
  { name: '파동', icon: <><path d="M1 14V7l4 5 4-4 3 4 3-5v7" stroke="#505050" /><path d="M4 8V2M2 4l2-3 2 3" stroke="#e03010" strokeWidth="1.500" /><path d="M11 0v6M9 4l2 3 2-3" stroke="#2020e0" strokeWidth="1.500" /></> },
  { name: '패턴', icon: <><path d="M2 3.500h10M12 4l-9 8" stroke="#505050" /><path d="M2 12.500h10M2 8h10" stroke="#3030a0" />{corner}</> },
  { name: '갠', icon: <><path d="M4 14L14 3" stroke="#505050" /><path d="M5.500 1.500h-4v4h4V4H4" stroke="#e03010" strokeWidth="1.500" />{corner}</> },
  { name: '부채꼴', icon: <><path d="M2 13L4 2M2 13L9 2M2 13l11-7" stroke="#505050" /><path d="M1 13.500h13" stroke="#2020c0" strokeWidth="1.500" />{corner}</> },
  { name: '평행선', icon: <><path d="M1 8l6-6M2 13L13 2M7 13l6-6M1 12l8-8" stroke="#505050" strokeDasharray="4 1" />{corner}</> },
  { name: '시간대', icon: <><path d="M2.500 3v10M5.500 3v10M9.500 3v10M12.500 3v10" stroke="#505050" /><path d="M0 12l6-8M5 10l9-4" stroke="#c04020" />{corner}</> },
  { name: '회귀선', icon: <path d="M1 14L14 2M3.500 9v6M6.500 6v6M9.500 4v6M12.500 2v6" stroke="#2828a0" /> },
  { name: '채널', icon: <path d="M1 14L14 6M1 8L14 0M4.500 4v9M7.500 4v9M10.500 2v10M2 15L9 3M6 15l8-12" stroke="#2828a0" /> },
  { name: '지그재그', icon: <path d="M1 11l4-3 3 3 3-5 1 2 3-2" stroke="#505050" /> },
  { name: '되돌림', icon: <><path d="M4 2.500h12M6 7.500h10M4 12.500h12" stroke="#505050" strokeWidth="1.500" /><path d="M1 14l4-6" stroke="#505050" /><path d="M4 6h3v3H4z" fill="#2020d0" stroke="none" /><path d="M0 12h3v3H0z" fill="#e02010" stroke="none" /></> },
]

const corridor = (
  <Icon size={20}>
    <path d="M1 7l2 1 2-3 3 2 7-5-2 5" stroke="#505050" />
    <text x="0" y="14" fontSize="5" fontWeight="bold" fill="#d83020" stroke="none">AUTO</text>
    {corner}
  </Icon>
)

const VIEW_TOOLS: { name: string; icon: ReactNode }[] = [
  { name: '화면', icon: <><path d="M1.500 2.500h12v11h-12z" stroke="#404040" strokeWidth="1.500" /><path d="M1 3h13" stroke="#404040" strokeWidth="2" /><path d="M3 6h5l-5 4z" fill="#e03010" stroke="none" />{corner}</> },
  { name: '문서', icon: <path d="M2.500 4.500l3-3h7v13h-10zM5 7h5M5 9.500h5M5 12h5" stroke="#505050" /> },
  { name: '차트', icon: <><path d="M1.500 1v13.500H15" stroke="#505050" /><path d="M4 14v-3M7 14v-5M10 14v-4M13 14v-6" stroke="#707070" strokeWidth="2" /><path d="M2 9l4-4 3 3 5-6" stroke="#d03030" /></> },
  { name: '주기', icon: <path d="M1.500 1.500v4h3l1-1v-2l-1-1zM9 1v4.500l2-2 2 2V1M7.500 0v15M0 8h15M1.500 14v-4h5v4M4 10v4M9.500 14v-4h4v4M11.500 10v4" stroke="#505050" /> },
  { name: '설정', icon: <><path d="M2 2a4 4 0 0 0 5 5l5 6 2-2-6-5a4 4 0 0 0-4-4l2 2-2 2z" stroke="#606060" />{corner}</> },
]

function Pager({ strong = false }: { strong?: boolean }) {
  return (
    <div className="flex h-[26px] flex-col border border-[#808080] bg-[#f0f0f0]">
      <button type="button" aria-label="위로" className="flex flex-1 items-center justify-center bg-linear-to-b from-white to-[#d8d8d8]">
        <Icon size={8}><path d="M0 12h16L8 3z" fill="#909090" stroke="none" /></Icon>
      </button>
      <button type="button" aria-label="아래로" className="flex flex-1 items-center justify-center border-t border-[#808080] bg-linear-to-b from-white to-[#d8d8d8]">
        <Icon size={8}><path d="M0 4h16l-8 9z" fill={strong ? '#304878' : '#909090'} stroke="none" /></Icon>
      </button>
    </div>
  )
}

function ToolButton({ name, children }: { name: string; children: ReactNode }) {
  return (
    <button type="button" aria-label={name} className="flex h-[22px] w-full items-center justify-center text-[#505050]">
      {children}
    </button>
  )
}

function ToolRails() {
  return (
    <>
      <nav aria-label="지표 바로가기" className="flex w-[29px] shrink-0 flex-col gap-0.5">
        <Pager />
        <div className="flex-1 border border-[#808080] bg-[#efefef]">
          <div className="bg-linear-to-r from-[#f4f4f4] to-[#d8d8dc]">
            {INDICATORS.map(lines => (
              <button
                key={lines.join('')}
                type="button"
                className="flex h-[22px] w-full flex-col items-center justify-center text-[10px] leading-[10px] font-bold whitespace-nowrap"
              >
                {lines.map(l => <span key={l}>{l}</span>)}
              </button>
            ))}
          </div>
        </div>
      </nav>
      <nav aria-label="그리기 도구" className="flex w-[28px] shrink-0 flex-col gap-0.5">
        <Pager strong />
        <div className="flex-1 border border-[#808080] bg-[#efefef]">
          <div className="bg-linear-to-r from-[#fafafa] to-[#d4d4d8]">
            <button type="button" aria-label="선택" className="mx-auto flex h-[22px] w-6 items-center justify-center rounded-sm border border-[#8098a8] bg-[#f0f4f8]">
              <Icon><path d="M1 1l3 9 2-2 6 6 2-2-6-6 3-2z" fill="#203858" stroke="none" /></Icon>
            </button>
            <ToolButton name="되돌리기"><Icon><path d="M7 8a4 4 0 1 0 0-4M7 1v4h4" stroke="#e08040" strokeWidth="1.500" /><path d="M1 9l5 5 1-2-4-4z" fill="#a0a0a0" stroke="#505050" /></Icon></ToolButton>
            <ToolButton name="전체 삭제">
              <Icon size={18}>
                <text x="1" y="5" fontSize="6" fontWeight="bold" fill="#e02010" stroke="none">ALL</text>
                <path d="M2 11l4-4h7l-4 4zM2 11v3h7v-3M9 14l4-4V7" stroke="#505050" />{corner}
              </Icon>
            </ToolButton>
            <ToolButton name="도움말"><Icon><path d="M4 4.500c0-3 7-3 7 0 0 2-3.500 2.500-3.500 5M7.500 12v2" stroke="#606060" strokeWidth="1.800" />{corner}</Icon></ToolButton>
            <hr className="mx-1 my-px border-t-2 border-[#a0a0a0]" />
            {DRAW_TOOLS.map(t => <ToolButton key={t.name} name={t.name}><Icon>{t.icon}</Icon></ToolButton>)}
            <ToolButton name="자동 추세선">{corridor}</ToolButton>
            {VIEW_TOOLS.map(t => <ToolButton key={t.name} name={t.name}><Icon>{t.icon}</Icon></ToolButton>)}
          </div>
        </div>
      </nav>
    </>
  )
}

export default function App() {
  return (
    <div className="flex min-h-screen flex-col border-l border-[#808080] bg-[#dcdcd8] font-['Liberation_Sans','Noto_Sans_CJK_KR',sans-serif] text-black">
      <TitleBar />
      <main className="mt-[3px] mr-1 mb-1 ml-[3px] flex flex-1 flex-col border border-[#909090]">
        <Toolbar />
        <QuoteBar />
        <div className="flex flex-1 pt-0.5 pr-0.5 pb-px pl-1">
          <Sidebar />
          <div className="mr-0.5 ml-[3px] flex min-w-0 flex-1 flex-col border border-[#707880] bg-white">
            <div className="pt-0.5 pr-px pl-[3px]">
              <div className="border-t border-l border-[#b8b8b8]">
                <Panel legend={PRICE_LEGEND}><PriceChart /></Panel>
                <Panel legend={VOLUME_LEGEND}><VolumeChart /></Panel>
                <Panel legend={MACD_LEGEND}><MacdChart /></Panel>
                <Panel legend={OSC_LEGEND} last><OscillatorChart /></Panel>
              </div>
            </div>
            <BottomBar />
          </div>
          <div className="flex gap-px">
            <ToolRails />
          </div>
        </div>
      </main>
    </div>
  )
}
